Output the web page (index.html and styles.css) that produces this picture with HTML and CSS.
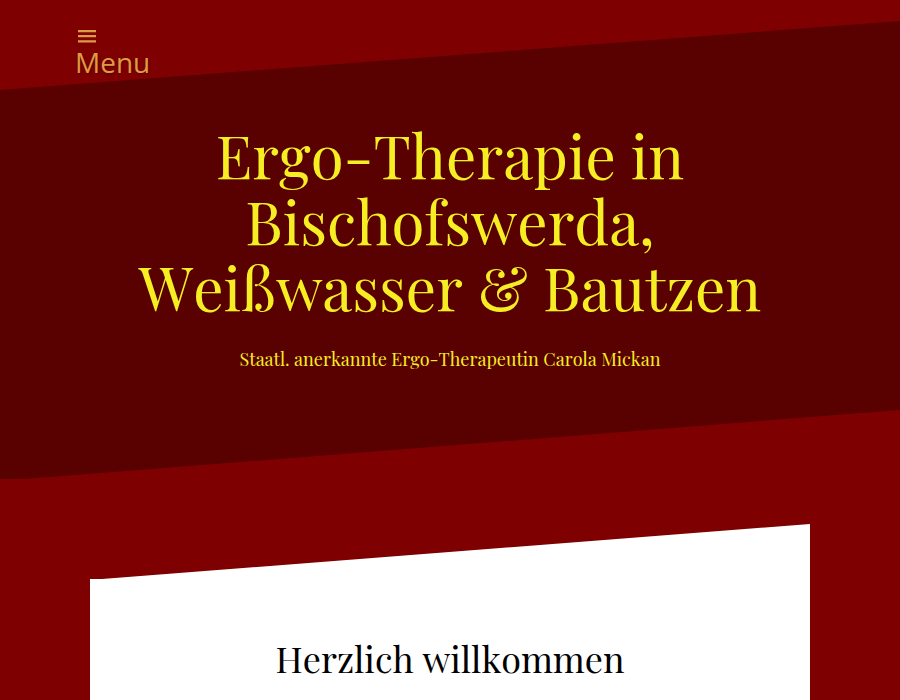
FILE: index.html
```html
<!DOCTYPE html>
<html lang="de">
<head>
    <meta charset="utf-8">
    <meta name="viewport" content="width=device-width, initial-scale=1">
    <title>Ergo-Therapie Carola Mickan</title>
    <link rel="stylesheet" href="styles.css">
</head>
<body>
    <header class="header">
        <nav class="nav">
            <button type="button" class="menu-toggle">
                <svg class="menu-icon" viewBox="0 0 18 13" aria-hidden="true">
                    <path d="M0 0h18v2.3H0zM0 5h18v2.3H0zM0 10.2h18v2.3H0z"/>
                </svg>
                <span>Menu</span>
            </button>
        </nav>
        <div class="intro">
            <h1>Ergo-Therapie in Bischofswerda, Weißwasser &amp; Bautzen</h1>
            <p>Staatl. anerkannte Ergo-Therapeutin Carola Mickan</p>
        </div>
    </header>
    <main class="content">
        <h2>Herzlich willkommen</h2>
    </main>
</body>
</html>
```

FILE: styles.css
```css
* {
    box-sizing: border-box;
}

body {
    margin: 0;
    background: #7f0000;
    font-family: "Playfair Display", "Liberation Serif", serif;
    font-kerning: none;
}

.header {
    position: relative;
    padding: 30px 0 108px;
}

/* slanted dark band behind menu and title */
.header::before {
    content: "";
    position: absolute;
    top: 0;
    right: 0;
    bottom: 0;
    left: 0;
    z-index: -1;
    background: #590000;
    clip-path: polygon(0 90px, 100% 21px, 100% calc(100% - 69px), 24px 100%, 0 100%);
}

.nav {
    padding: 0 75px;
}

.menu-toggle {
    display: flex;
    flex-direction: column;
    padding: 0;
    border: 0;
    background: none;
    color: #dd9b45;
    font: 28px/38px "Open Sans", "Noto Sans", sans-serif;
    text-shadow: 1px 1px 2px #590000;
    cursor: pointer;
}

.menu-icon {
    width: 18px;
    height: 13px;
    margin-left: 3px;
    fill: currentColor;
}

.intro {
    padding: 40px 15% 0;
    color: #f5ee23;
    text-align: center;
}

.intro h1 {
    margin: 0;
    font-size: 60px;
    line-height: 66px;
    font-weight: 400;
}

.intro p {
    margin: 28px 0 0;
    font-size: 18px;
    line-height: 24px;
}

.content {
    margin: 45px 10% 0;
    padding: 110px 20px 18px;
    background: #fff;
    color: #000;
    text-align: center;
    clip-path: polygon(0 55px, 12px 55px, 100% 0, 100% 100%, 0 100%);
}

.content h2 {
    margin: 0;
    font-size: 36px;
    line-height: 48px;
    font-weight: 400;
}
```
